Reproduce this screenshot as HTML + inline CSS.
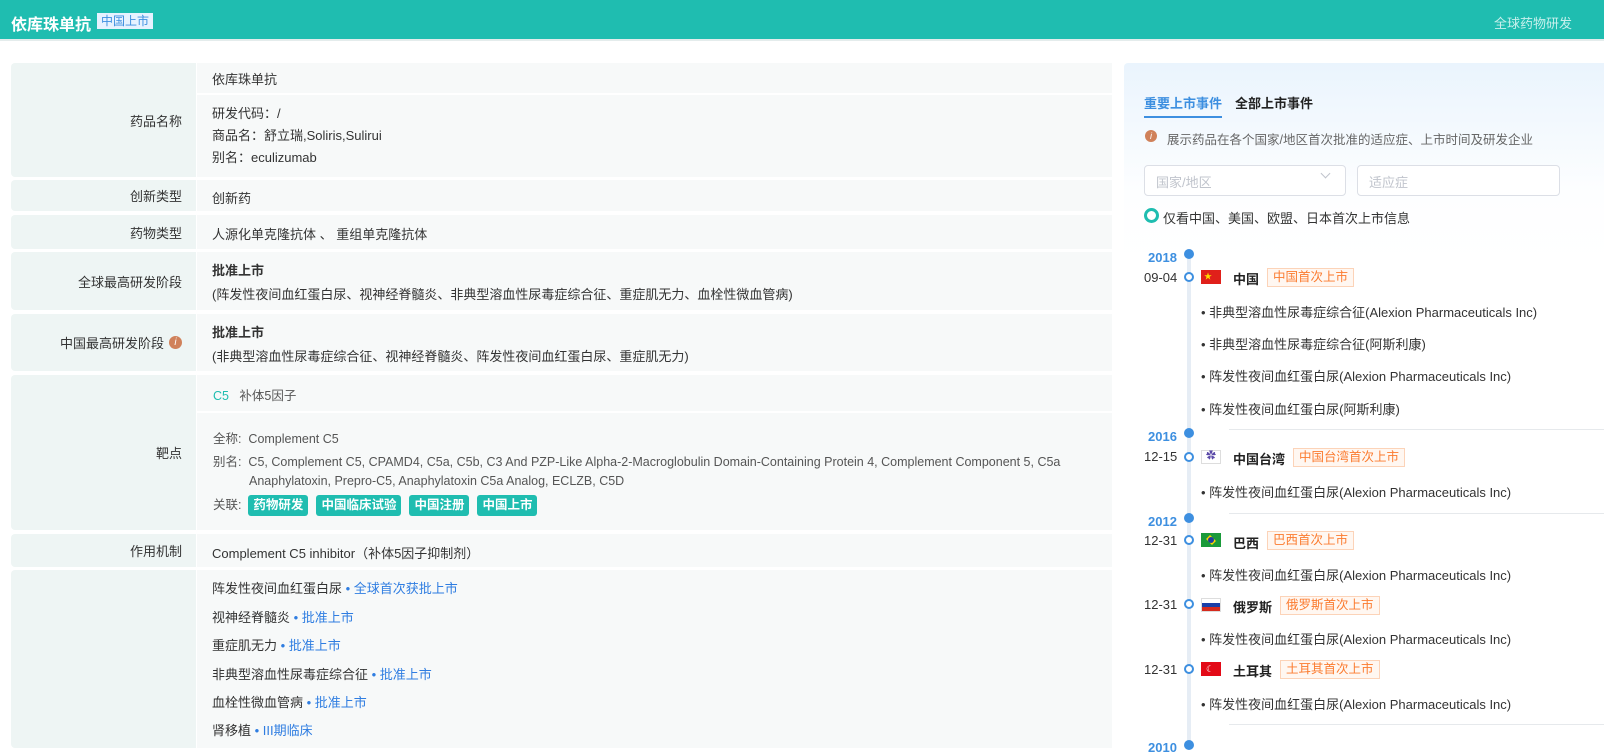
<!DOCTYPE html>
<html><head><meta charset="utf-8"><style>
*{margin:0;padding:0;box-sizing:border-box}
body{width:1604px;height:748px;overflow:hidden;background:#fff;font-family:"Liberation Sans","Noto Sans CJK SC",sans-serif;font-size:13px;color:#333;position:relative}
.a{position:absolute;white-space:nowrap}
.hdr{left:0;top:0;width:1604px;height:41px;background:#1fbdb0;border-bottom:2px solid #e4ecec}
.lab{background:#eef5f4;border-radius:4px 0 0 4px;left:11px;width:185px;text-align:right;padding-right:14px;display:flex;align-items:center;justify-content:flex-end;color:#333}
.con{background:#f7f9f9;left:197px;width:915px}
.blue{color:#2f7de1}
.tag{background:#1fbdb0;color:#fff;font-weight:bold;border-radius:3px;padding:0 5px;height:21px;line-height:21px;display:inline-block;margin-right:8px}
.dot{width:10px;height:10px;border-radius:50%;background:#3d8fe0}
.ring{width:10px;height:10px;border-radius:50%;border:2.5px solid #3d8fe0;background:#fff}
.yr{color:#3d8fe0;font-weight:bold;font-size:13px}
.ot{border:1px solid #fcd3b8;background:#fff7f1;color:#fb7b2f;padding:0 5px;height:19px;line-height:17px;font-size:12.5px}
.flag{width:20px;height:14px;border:1px solid #ddd}
.li{color:#333}
.sep{height:1px;background:#e6e9ec;left:1229px;width:375px}
</style></head><body>
<div class="a hdr"></div>
<div class="a" style="left:11px;top:11px;color:#fff;font-weight:bold;font-size:16px">依库珠单抗</div>
<div class="a" style="left:97px;top:13px;background:#e6f2ff;color:#3d8fe0;font-size:12px;padding:0 4px;height:16px;line-height:16px">中国上市</div>
<div class="a" style="left:1494px;top:13px;color:#c8f0ec;font-size:13px">全球药物研发</div>

<!-- rows -->
<div class="a lab" style="top:63px;height:114px">药品名称</div>
<div class="a con" style="top:63px;height:30px"></div>
<div class="a con" style="top:95px;height:82px"></div>
<div class="a" style="left:212px;top:69px">依库珠单抗</div>
<div class="a" style="left:212px;top:103px">研发代码：/</div>
<div class="a" style="left:212px;top:125px">商品名：舒立瑞,Soliris,Sulirui</div>
<div class="a" style="left:212px;top:147px">别名：eculizumab</div>

<div class="a lab" style="top:180px;height:31px">创新类型</div>
<div class="a con" style="top:180px;height:31px"></div>
<div class="a" style="left:212px;top:188px">创新药</div>

<div class="a lab" style="top:215px;height:34px">药物类型</div>
<div class="a con" style="top:215px;height:34px"></div>
<div class="a" style="left:212px;top:224px">人源化单克隆抗体 、 重组单克隆抗体</div>

<div class="a lab" style="top:252px;height:58px">全球最高研发阶段</div>
<div class="a con" style="top:252px;height:58px"></div>
<div class="a" style="left:212px;top:260px;font-weight:bold">批准上市</div>
<div class="a" style="left:212px;top:284px">(阵发性夜间血红蛋白尿、视神经脊髓炎、非典型溶血性尿毒症综合征、重症肌无力、血栓性微血管病)</div>

<div class="a lab" style="top:314px;height:57px">中国最高研发阶段 <span style="display:inline-block;width:13px;height:13px;border-radius:50%;background:#d0815a;color:#fff;font-size:10px;line-height:13px;text-align:center;font-style:italic;margin-left:5px">i</span></div>
<div class="a con" style="top:314px;height:57px"></div>
<div class="a" style="left:212px;top:322px;font-weight:bold">批准上市</div>
<div class="a" style="left:212px;top:346px">(非典型溶血性尿毒症综合征、视神经脊髓炎、阵发性夜间血红蛋白尿、重症肌无力)</div>

<div class="a lab" style="top:375px;height:155px">靶点</div>
<div class="a con" style="top:375px;height:36px"></div>
<div class="a con" style="top:413px;height:117px"></div>
<div class="a" style="left:213px;top:385px;font-size:12.5px"><span style="color:#1fbdb0">C5</span>&nbsp;&nbsp; <span style="color:#555">补体5因子</span></div>
<div class="a" style="left:213px;top:428px;font-size:12.5px;color:#555">全称:&nbsp; Complement C5</div>
<div class="a" style="left:213px;top:451px;font-size:12.5px;color:#555">别名:&nbsp; C5, Complement C5, CPAMD4, C5a, C5b, C3 And PZP-Like Alpha-2-Macroglobulin Domain-Containing Protein 4, Complement Component 5, C5a</div>
<div class="a" style="left:249px;top:474px;font-size:12.5px;color:#555">Anaphylatoxin, Prepro-C5, Anaphylatoxin C5a Analog, ECLZB, C5D</div>
<div class="a" style="left:213px;top:494px;font-size:12.5px;color:#555">关联:&nbsp; <span class="tag">药物研发</span><span class="tag">中国临床试验</span><span class="tag">中国注册</span><span class="tag">中国上市</span></div>

<div class="a lab" style="top:534px;height:33px">作用机制</div>
<div class="a con" style="top:534px;height:33px"></div>
<div class="a" style="left:212px;top:543px">Complement C5 inhibitor（补体5因子抑制剂）</div>

<div class="a lab" style="top:570px;height:178px"></div>
<div class="a con" style="top:570px;height:178px"></div>
<div class="a" style="left:212px;top:578px">阵发性夜间血红蛋白尿<span class="blue"> • 全球首次获批上市</span></div>
<div class="a" style="left:212px;top:607px">视神经脊髓炎<span class="blue"> • 批准上市</span></div>
<div class="a" style="left:212px;top:635px">重症肌无力<span class="blue"> • 批准上市</span></div>
<div class="a" style="left:212px;top:664px">非典型溶血性尿毒症综合征<span class="blue"> • 批准上市</span></div>
<div class="a" style="left:212px;top:692px">血栓性微血管病<span class="blue"> • 批准上市</span></div>
<div class="a" style="left:212px;top:720px">肾移植<span class="blue"> • III期临床</span></div>

<!-- right panel -->
<div class="a" style="left:1124px;top:63px;width:480px;height:685px;background:linear-gradient(180deg,#eaf4fd 0px,#fdfeff 130px,#fff 200px);border-radius:4px 0 0 0"></div>
<div class="a" style="left:1144px;top:93px;color:#3d8fe0;font-weight:bold">重要上市事件</div>
<div class="a" style="left:1144px;top:116px;width:78px;height:2px;background:#3d8fe0"></div>
<div class="a" style="left:1235px;top:93px;color:#222;font-weight:bold">全部上市事件</div>
<div class="a" style="left:1145px;top:130px;width:12px;height:12px;border-radius:50%;background:#d0815a;color:#fff;font-size:9px;line-height:12px;text-align:center;font-style:italic">i</div>
<div class="a" style="left:1167px;top:129px;color:#666;font-size:12.5px">展示药品在各个国家/地区首次批准的适应症、上市时间及研发企业</div>
<div class="a" style="left:1144px;top:165px;width:202px;height:31px;border:1px solid #dcdfe6;border-radius:4px;background:#fff"></div>
<div class="a" style="left:1156px;top:172px;color:#c0c4cc">国家/地区</div>
<div class="a" style="left:1322px;top:170px;width:7px;height:7px;border-right:1px solid #c0c4cc;border-bottom:1px solid #c0c4cc;transform:rotate(45deg)"></div>
<div class="a" style="left:1357px;top:165px;width:203px;height:31px;border:1px solid #dcdfe6;border-radius:4px;background:#fff"></div>
<div class="a" style="left:1369px;top:172px;color:#c0c4cc">适应症</div>
<div class="a" style="left:1144px;top:208px;width:15px;height:15px;border-radius:50%;border:3px solid #1fbdb0;background:#fff"></div>
<div class="a" style="left:1163px;top:208px;color:#333">仅看中国、美国、欧盟、日本首次上市信息</div>

<div class="a" style="left:1187px;top:255px;width:4px;height:493px;background:#e6edf5"></div>

<div class="a dot" style="left:1184px;top:249px"></div>
<div class="a yr" style="left:1148px;top:250px">2018</div>
<div class="a ring" style="left:1184px;top:272px"></div>
<div class="a" style="left:1144px;top:270px">09-04</div>
<div class="a flag" style="left:1201px;top:270px;background:#e0201a;border-color:#e0201a"><span style="color:#ffde00;font-size:8px;position:absolute;left:2px;top:0">★</span></div>
<div class="a" style="left:1233px;top:269px;font-weight:bold;color:#222">中国</div>
<div class="a ot" style="left:1267px;top:268px">中国首次上市</div>
<div class="a li" style="left:1201px;top:302px">• 非典型溶血性尿毒症综合征(Alexion Pharmaceuticals Inc)</div>
<div class="a li" style="left:1201px;top:334px">• 非典型溶血性尿毒症综合征(阿斯利康)</div>
<div class="a li" style="left:1201px;top:366px">• 阵发性夜间血红蛋白尿(Alexion Pharmaceuticals Inc)</div>
<div class="a li" style="left:1201px;top:399px">• 阵发性夜间血红蛋白尿(阿斯利康)</div>
<div class="a sep" style="top:429px"></div>

<div class="a dot" style="left:1184px;top:428px"></div>
<div class="a yr" style="left:1148px;top:429px">2016</div>
<div class="a ring" style="left:1184px;top:452px"></div>
<div class="a" style="left:1144px;top:449px">12-15</div>
<div class="a flag" style="left:1201px;top:450px;background:#fff;text-align:center;font-size:10px;line-height:12px;color:#5b4aa8">✿</div>
<div class="a" style="left:1233px;top:449px;font-weight:bold;color:#222">中国台湾</div>
<div class="a ot" style="left:1293px;top:448px">中国台湾首次上市</div>
<div class="a li" style="left:1201px;top:482px">• 阵发性夜间血红蛋白尿(Alexion Pharmaceuticals Inc)</div>
<div class="a sep" style="top:513px"></div>

<div class="a dot" style="left:1184px;top:513px"></div>
<div class="a yr" style="left:1148px;top:514px">2012</div>
<div class="a ring" style="left:1184px;top:535px"></div>
<div class="a" style="left:1144px;top:533px">12-31</div>
<div class="a flag" style="left:1201px;top:533px;background:#1a9a3a;border-color:#1a9a3a"><span class="a" style="left:3px;top:2px;width:12px;height:8px;background:#ffd700;transform:rotate(45deg) scale(.7,.7)"></span><span class="a" style="left:6px;top:3px;width:6px;height:6px;border-radius:50%;background:#1f3f9e"></span></div>
<div class="a" style="left:1233px;top:533px;font-weight:bold;color:#222">巴西</div>
<div class="a ot" style="left:1267px;top:531px">巴西首次上市</div>
<div class="a li" style="left:1201px;top:565px">• 阵发性夜间血红蛋白尿(Alexion Pharmaceuticals Inc)</div>

<div class="a ring" style="left:1184px;top:599px"></div>
<div class="a" style="left:1144px;top:597px">12-31</div>
<div class="a flag" style="left:1201px;top:598px;background:linear-gradient(#fff 0 33%,#1a3fa8 33% 66%,#d52b1e 66%)"></div>
<div class="a" style="left:1233px;top:597px;font-weight:bold;color:#222">俄罗斯</div>
<div class="a ot" style="left:1280px;top:596px">俄罗斯首次上市</div>
<div class="a li" style="left:1201px;top:629px">• 阵发性夜间血红蛋白尿(Alexion Pharmaceuticals Inc)</div>

<div class="a ring" style="left:1184px;top:664px"></div>
<div class="a" style="left:1144px;top:662px">12-31</div>
<div class="a flag" style="left:1201px;top:662px;background:#e30a17;border-color:#e30a17;color:#fff;font-size:9px;line-height:12px;padding-left:4px">☾</div>
<div class="a" style="left:1233px;top:661px;font-weight:bold;color:#222">土耳其</div>
<div class="a ot" style="left:1280px;top:660px">土耳其首次上市</div>
<div class="a li" style="left:1201px;top:694px">• 阵发性夜间血红蛋白尿(Alexion Pharmaceuticals Inc)</div>
<div class="a sep" style="top:724px"></div>
<div class="a dot" style="left:1184px;top:740px"></div>
<div class="a yr" style="left:1148px;top:740px">2010</div>
</body></html>
